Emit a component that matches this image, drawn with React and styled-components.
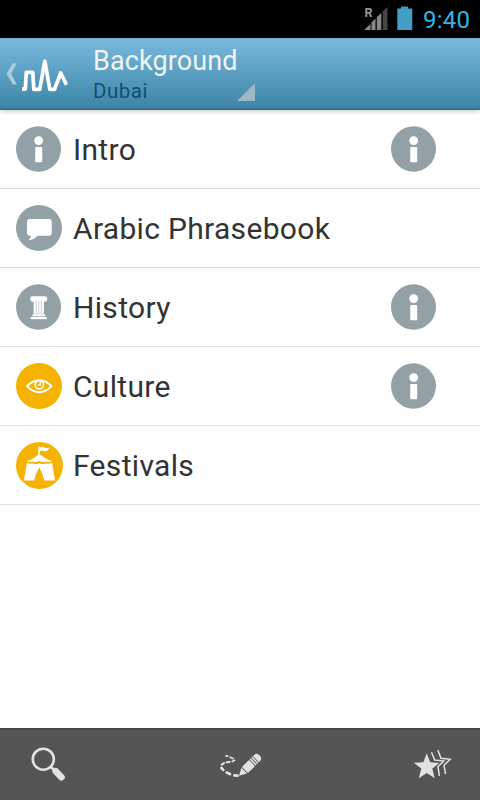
import styled, { createGlobalStyle } from 'styled-components'

const GlobalStyle = createGlobalStyle`
  * {
    box-sizing: border-box;
  }
  body {
    margin: 0;
    background: #fff;
    font-family: Roboto, 'Noto Sans', sans-serif;
  }
  svg {
    display: block;
    flex: none;
  }
`

const Screen = styled.div`
  width: 480px;
  height: 800px;
  display: flex;
  flex-direction: column;
  overflow: hidden;
  background: #fff;
`

const StatusBar = styled.div`
  height: 38px;
  flex: none;
  display: flex;
  justify-content: flex-end;
  padding-right: 9px;
  background: #000;
`

const Clock = styled.span`
  margin-left: 10px;
  width: 48px;
  font-size: 24px;
  line-height: 40px;
  letter-spacing: 0.2px;
  white-space: nowrap;
  color: #33b5e5;
`

const Header = styled.header`
  height: 72px;
  flex: none;
  display: flex;
  padding-left: 4px;
  background: linear-gradient(#78b9dc, #3d85a8);
  border-top: 1px solid #6babcb;
  border-bottom: 2px solid #34718f;
  box-shadow: 0 1px 5px rgba(0, 0, 0, 0.25);
  z-index: 1;
`

const Titles = styled.div`
  width: 147px;
  margin-left: 19px;
  white-space: nowrap;
`

const Title = styled.div`
  padding-top: 6px;
  font-size: 27px;
  line-height: 32px;
  letter-spacing: 0.1px;
  color: #f3f3f3;
`

const Subtitle = styled.div`
  font-size: 20.5px;
  line-height: 28px;
  letter-spacing: 0.5px;
  color: #134f70;
`

const Spinner = styled.div`
  width: 18px;
  height: 18px;
  margin-top: 44px;
  margin-left: -3px;
  background: #9bb8c6;
  clip-path: polygon(100% 0, 100% 100%, 0 100%);
`

const List = styled.main`
  flex: 1;
`

const Row = styled.div`
  height: 79px;
  display: flex;
  align-items: center;
  padding: 0 44px 0 16px;
  border-bottom: 1px solid #e0e0e0;
`

const IconSlot = styled.div`
  width: 57px;
  flex: none;
`

const Label = styled.div`
  flex: 1;
  padding-top: 2px;
  font-size: 30px;
  line-height: 40px;
  letter-spacing: 0.32px;
  white-space: nowrap;
  color: #333;
`

const Toolbar = styled.footer`
  height: 72px;
  flex: none;
  display: flex;
  justify-content: space-between;
  background: #555;
  border-top: 2px solid #484848;
`

function StatusIcons() {
  return (
    <svg width="50" height="38" viewBox="363 0 50 38">
      <path d="M364 30L370.5 24V30Z" fill="#888" />
      <path d="M371.5 30V22.5L375.5 18.5V30ZM376.8 30V17.2L381.3 13V30Z" fill="#888" />
      <path d="M382.7 30V11.5L387.5 7V30Z" fill="#444" />
      <text x="364.5" y="17" fontSize="12.5" fontWeight="700" fill="#999">
        R
      </text>
      <path d="M397.3 8.5H401V6.5H408V8.5H412.3V30H397.3Z" fill="#419ec5" />
    </svg>
  )
}

function Logo() {
  return (
    <svg width="70" height="69" viewBox="4 39 70 69">
      <path d="M12.8 63.3H16.7L11.2 73.8L16.7 84.5H12.8L6.5 73.8Z" fill="#a9cddf" />
      <path
        d="M22 89.2H25.3L26.3 72.4H32.8L33.8 89.3H39.8L44.8 61L49.8 89.3H54.5L60.7 73L66.4 84.8"
        fill="none"
        stroke="#fff"
        strokeWidth="3.7"
        strokeLinejoin="round"
      />
    </svg>
  )
}

function InfoIcon() {
  return (
    <svg width="45" height="46" viewBox="0 0 45 46">
      <ellipse cx="22.5" cy="23" rx="22.5" ry="22.8" fill="#93a1a7" />
      <circle cx="22.7" cy="14.6" r="4.4" fill="#fff" />
      <rect x="19.2" y="21" width="7" height="15.2" rx="1" fill="#fff" />
    </svg>
  )
}

function ChatIcon() {
  return (
    <svg width="46" height="46" viewBox="0 0 46 46">
      <circle cx="23" cy="23" r="23" fill="#93a1a7" />
      <path
        d="M14 14H33Q35.7 14 35.7 16.5V28Q35.7 30.7 33 30.7H21.5Q18 34.8 12.5 35.2Q15 33 15 30.7H14Q11 30.7 11 28V16.5Q11 14 14 14Z"
        fill="#fff"
      />
    </svg>
  )
}

function ColumnIcon() {
  return (
    <svg width="45" height="46" viewBox="0 0 45 46">
      <ellipse cx="22.5" cy="23" rx="22.5" ry="22.8" fill="#93a1a7" />
      <g fill="#fff">
        <path d="M16 12.2H29Q31.5 12.5 31.2 15.5Q30.5 18.5 27.9 17.5V29.7H17.6V17.5Q14.8 18.5 14.2 15.5Q13.8 12.5 16 12.2Z" />
        <rect x="16.5" y="30.2" width="12.7" height="2.1" />
        <rect x="14.8" y="33" width="16" height="2.2" />
      </g>
      <path d="M20.2 16.5V29.5M22.8 16.5V29.5M25.3 16.5V29.5" stroke="#b4bec2" strokeWidth="0.7" />
    </svg>
  )
}

function EyeIcon() {
  return (
    <svg width="46" height="46" viewBox="0 0 46 46">
      <circle cx="23" cy="23" r="23" fill="#f5b200" />
      <g fill="none" stroke="#fff">
        <path d="M11 23.2Q16.5 17.2 23.2 17.2T35.5 23.2Q30 29.2 23.2 29.2T11 23.2Z" strokeWidth="1.9" />
        <circle cx="23.3" cy="21.8" r="4.2" strokeWidth="1.6" />
        <path d="M24.3 18.8V21.8H21.6" strokeWidth="1.3" />
      </g>
    </svg>
  )
}

function TentIcon() {
  return (
    <svg width="47" height="47" viewBox="0 0 47 47">
      <circle cx="23.5" cy="23.5" r="23.5" fill="#f5b200" />
      <g fill="#fff">
        <path d="M22.3 4.5H23.7V12.3L29 16Q32.5 18 36 18.7Q33.5 21 30.5 19.4Q27 20.7 23.3 19Q19.5 20.7 16.5 19.4Q13.5 21 11 18.7Q15 18 18 16L22.3 12.3Z" />
        <path d="M23.5 5.5Q26 4 28.5 5.5T34 5.4L31 9Q28.5 9.6 26.8 8.8T23.5 9.7Z" />
        <path d="M11 20.4Q14 22.4 17 21.4Q20 22.9 23.3 21.2Q27 22.9 30 21.4Q33.5 22.2 36 20.4L39 38.5H28.3Q26.5 31 23.2 25.5Q20 31 18 38.5H7.8Z" />
      </g>
    </svg>
  )
}

function SearchIcon() {
  return (
    <svg width="96" height="70" viewBox="0 730 96 70">
      <circle cx="43.3" cy="759.2" r="10.5" fill="none" stroke="#e2e2e2" strokeWidth="2.6" />
      <path d="M50.5 766.5L54.5 770.5" stroke="#e2e2e2" strokeWidth="2.7" />
      <path d="M55.8 771.3L61.5 777.2" stroke="#e2e2e2" strokeWidth="6.6" strokeLinecap="round" />
    </svg>
  )
}

function DrawIcon() {
  return (
    <svg width="96" height="70" viewBox="192 730 96 70">
      <g fill="none" stroke="#e2e2e2" strokeLinecap="round">
        <path d="M226 755.8L227.7 756.2M230.3 757.2L233 758.6M234.6 760.3L232.3 761.5" strokeWidth="1.7" />
        <path d="M229.5 762L226.8 762.3M224 763L221.8 764.7" strokeWidth="2.1" />
        <path d="M221.4 768L223.2 769.9M226.7 772.6L230 774M234.4 775.4L237.6 775.7" strokeWidth="2.7" />
      </g>
      <g transform="translate(239 775.8) rotate(-44.5)" fill="#e2e2e2">
        <path d="M0 0L7.3 -4V4Z" />
        <rect x="8.2" y="-4.3" width="10" height="8.6" rx="0.8" />
        <rect x="19" y="-4.3" width="1.6" height="8.6" />
        <rect x="21.4" y="-4.3" width="1.6" height="8.6" />
        <path d="M23.8 -4.3H25Q29 -4.3 29 0T25 4.3H23.8Z" />
      </g>
    </svg>
  )
}

function FavoritesIcon() {
  return (
    <svg width="96" height="70" viewBox="384 730 96 70">
      <path
        d="M426.8 753.5L430.2 762.3L439.3 762.9L432.3 768.6L434.7 778.2L426.8 773L418.8 778.2L421.3 768.6L413.8 762.7L423.3 762.3Z"
        fill="#e2e2e2"
      />
      <g fill="none" stroke="#e2e2e2" strokeWidth="1.5">
        <path d="M431.5 752.2L434.7 760L443.8 761L438 766.7L439.4 776" />
        <path d="M437.8 750L441 758.3L450.2 759.3L444 765.3L445.6 774.2" />
      </g>
    </svg>
  )
}

const topics = [
  { label: 'Intro', icon: InfoIcon, info: true },
  { label: 'Arabic Phrasebook', icon: ChatIcon },
  { label: 'History', icon: ColumnIcon, info: true },
  { label: 'Culture', icon: EyeIcon, info: true },
  { label: 'Festivals', icon: TentIcon },
]

function App() {
  return (
    <>
      <GlobalStyle />
      <Screen>
        <StatusBar>
          <StatusIcons />
          <Clock>9:40</Clock>
        </StatusBar>
        <Header>
          <Logo />
          <Titles>
            <Title>Background</Title>
            <Subtitle>Dubai</Subtitle>
          </Titles>
          <Spinner />
        </Header>
        <List>
          {topics.map(({ label, icon: Icon, info }) => (
            <Row key={label}>
              <IconSlot>
                <Icon />
              </IconSlot>
              <Label>{label}</Label>
              {info && <InfoIcon />}
            </Row>
          ))}
        </List>
        <Toolbar>
          <SearchIcon />
          <DrawIcon />
          <FavoritesIcon />
        </Toolbar>
      </Screen>
    </>
  )
}

export default App
